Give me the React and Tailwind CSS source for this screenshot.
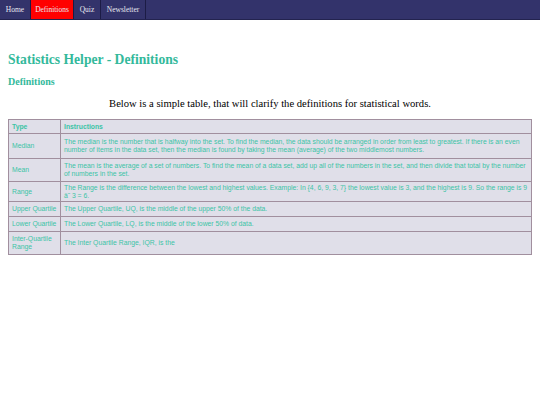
const rows = [
  {
    type: 'Median',
    text: 'The median is the number that is halfway into the set. To find the median, the data should be arranged in order from least to greatest. If there is an even number of items in the data set, then the median is found by taking the mean (average) of the two middlemost numbers.',
    h: 'h-[25px]',
  },
  {
    type: 'Mean',
    text: 'The mean is the average of a set of numbers. To find the mean of a data set, add up all of the numbers in the set, and then divide that total by the number of numbers in the set.',
    h: 'h-[23px]',
  },
  {
    type: 'Range',
    text: 'The Range is the difference between the lowest and highest values. Example: In {4, 6, 9, 3, 7} the lowest value is 3, and the highest is 9. So the range is 9 â˜ 3 = 6.',
    h: 'h-[20px]',
  },
  { type: 'Upper Quartile', text: 'The Upper Quartile, UQ, is the middle of the upper 50% of the data.', h: 'h-[15px]' },
  { type: 'Lower Quartile', text: 'The Lower Quartile, LQ, is the middle of the lower 50% of data.', h: 'h-[15px]' },
  { type: 'Inter-Quartile Range', text: 'The Inter Quartile Range, IQR, is the', h: 'h-[23px]' },
];

const nav = [
  { label: 'Home', w: 'w-[31px]' },
  { label: 'Definitions', w: 'w-[43px]', active: true },
  { label: 'Quiz', w: 'w-[27px]' },
  { label: 'Newsletter', w: 'w-[45px]' },
];

export default function App() {
  return (
    <div className="min-h-[405px] w-[540px] bg-white font-['Liberation_Serif',serif]">
      <nav className="h-5 bg-[#33336b] flex text-[7.5px] text-[#e8e8f0] border-b border-[#23234f]">
        {nav.map((n) => (
          <a
            key={n.label}
            className={`${n.w} h-full flex items-center justify-center border-r border-[#1c1c45] ${n.active ? 'bg-[#ff0000]' : ''}`}
          >
            {n.label}
          </a>
        ))}
      </nav>

      <div className="px-2">
        <h1 className="mt-[33px] text-[13.6px] font-bold text-[#33b99b] leading-none">
          Statistics Helper - Definitions
        </h1>
        <h2 className="mt-[10px] text-[10px] font-bold text-[#33b99b] leading-none">Definitions</h2>
        <p className="mt-[12px] text-center text-[10.6px] text-black leading-none">
          Below is a simple table, that will clarify the definitions for statistical words.
        </p>

        <table className="mt-[10px] w-full border-collapse border border-[#a18f9e] bg-[#e0dfe9] font-['Liberation_Sans',sans-serif] text-[6.8px] leading-[8px] text-[#3cc4a6]">
          <thead>
            <tr className="h-[14px]">
              <th className="w-[52px] border border-[#a18f9e] px-[3px] text-left font-bold">Type</th>
              <th className="border border-[#a18f9e] px-[3px] text-left font-bold">Instructions</th>
            </tr>
          </thead>
          <tbody>
            {rows.map((r) => (
              <tr key={r.type} className={r.h}>
                <td className="border border-[#a18f9e] px-[3px] align-middle">{r.type}</td>
                <td className="border border-[#a18f9e] px-[3px] align-middle">{r.text}</td>
              </tr>
            ))}
          </tbody>
        </table>
      </div>
    </div>
  );
}
